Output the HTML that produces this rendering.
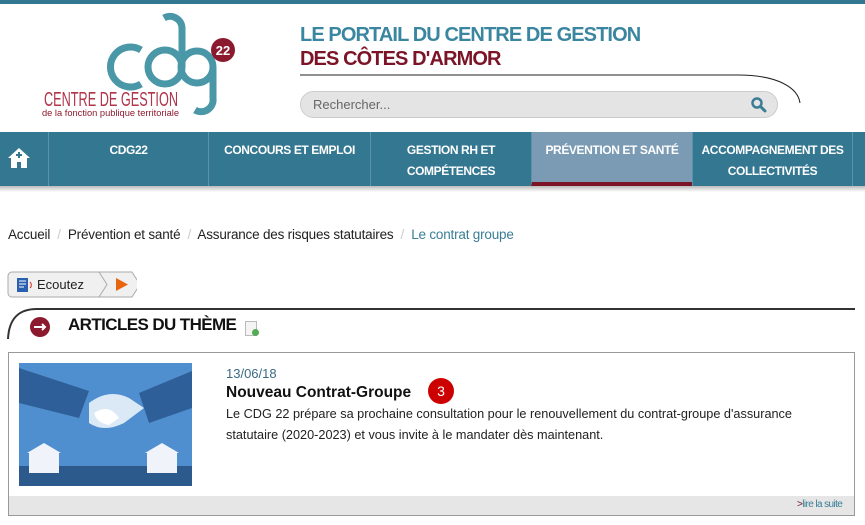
<!DOCTYPE html>
<html><head><meta charset="utf-8"><style>
*{margin:0;padding:0;box-sizing:border-box}
body{width:865px;height:525px;overflow:hidden;background:#fff;font-family:"Liberation Sans",sans-serif;position:relative;color:#222}
.a{position:absolute}
.nav{top:132px;left:0;width:865px;height:54px;background:#347791}
.nav div{position:absolute;top:0;height:54px;border-left:1px solid #5b93aa;color:#fff;font-weight:bold;font-size:12px;text-align:center;line-height:21px;padding-top:8px;letter-spacing:-0.4px}
</style></head><body>
<div class="a" style="top:0;left:0;width:865px;height:4px;background:#347791"></div>
<svg class="a" style="left:40px;top:12px" width="200" height="110" viewBox="40 12 200 110">
<g fill="none" stroke="#4a97a8" stroke-width="7">
<path d="M141 50 a20 20 0 1 0 0 34"/>
<circle cx="165" cy="67" r="17"/>
<path d="M182 67 V28 a12 12 0 0 0 -18 -10"/>
<circle cx="197" cy="67" r="16"/>
<path d="M213 67 V98 a12 12 0 0 1 -18 12"/>
</g>
<circle cx="223" cy="50" r="12" fill="#8b1a2e"/>
<text x="223" y="55" fill="#fff" font-size="13" font-weight="bold" text-anchor="middle" font-family="Liberation Sans">22</text>
<text x="44" y="106" fill="#b0344a" font-size="20" font-family="Liberation Sans Narrow,Liberation Sans" textLength="134" lengthAdjust="spacingAndGlyphs">CENTRE DE GESTION</text>
<text x="42" y="116" fill="#8b1a2e" font-size="9" font-family="Liberation Sans" textLength="137" lengthAdjust="spacingAndGlyphs">de la fonction publique territoriale</text>
</svg>
<div class="a" style="left:300px;top:24px;font-size:20px;font-weight:bold;color:#3a86a0;letter-spacing:-0.9px">LE PORTAIL DU CENTRE DE GESTION</div>
<div class="a" style="left:300px;top:48px;font-size:20px;font-weight:bold;color:#7c1427;letter-spacing:-0.9px">DES CÔTES D'ARMOR</div>
<svg class="a" style="left:298px;top:70px" width="510" height="35"><path d="M2 5 H440 C480 5 500 18 502 33" fill="none" stroke="#222" stroke-width="1"/></svg>
<div class="a" style="left:300px;top:91px;width:478px;height:27px;border-radius:14px;background:#e4e4e4;border:1px solid #ccc"></div>
<div class="a" style="left:313px;top:97px;font-size:13px;color:#666">Rechercher...</div>
<svg class="a" style="left:751px;top:97px" width="16" height="16"><circle cx="6" cy="6" r="4.5" fill="none" stroke="#3a7d96" stroke-width="2.5"/><path d="M9.5 9.5 L14 14" stroke="#3a7d96" stroke-width="3" stroke-linecap="round"/></svg>
<div class="a nav">
<svg class="a" style="left:7px;top:14px" width="24" height="24" viewBox="0 0 24 24"><path d="M12 2 L1 12 L4 12 L4 22 L10 22 L10 16 L14 16 L14 22 L20 22 L20 12 L23 12 Z" fill="#fff"/><path d="M12 6 v6 M9 9 h6" stroke="#347791" stroke-width="2"/></svg>
<div style="left:48px;width:160px">CDG22</div>
<div style="left:208px;width:162px">CONCOURS ET EMPLOI</div>
<div style="left:370px;width:161px">GESTION RH ET<br>COMPÉTENCES</div>
<div style="left:531px;width:161px;background:#7b9bb4;border-bottom:4px solid #7c1427">PRÉVENTION ET SANTÉ</div>
<div style="left:692px;width:160px">ACCOMPAGNEMENT DES<br>COLLECTIVITÉS</div>
<div style="left:852px;width:13px"></div>
</div>
<div class="a" style="top:186px;left:0;width:865px;height:6px;background:linear-gradient(#bbb,#fff)"></div>
<div class="a" style="left:8px;top:227px;font-size:13.5px;color:#222;letter-spacing:-0.2px">Accueil <span style="color:#ccc">&nbsp;/&nbsp;</span> Prévention et santé <span style="color:#ccc">&nbsp;/&nbsp;</span> Assurance des risques statutaires <span style="color:#ccc">&nbsp;/&nbsp;</span> <span style="color:#3a7d96">Le contrat groupe</span></div>
<svg class="a" style="left:7px;top:271px" width="130" height="28"><path d="M5 1 H125 L133 13.5 L125 26 H5 a4 4 0 0 1 -4 -4 V5 a4 4 0 0 1 4 -4Z" fill="#f0f0f0" stroke="#aaa"/><path d="M92 1 L100 13.5 L92 26" fill="none" stroke="#aaa"/><path d="M109 7 L121 13.5 L109 20Z" fill="#e8650c"/><rect x="10" y="7" width="11" height="14" fill="#2b5fb0"/><path d="M12 10h7M12 13h7M12 16h5" stroke="#fff"/><path d="M23 11 a4 4 0 0 1 0 6" stroke="#d22" fill="none"/></svg>
<div class="a" style="left:37px;top:277px;font-size:13px;color:#222">Ecoutez</div>
<svg class="a" style="left:7px;top:306px" width="850" height="34"><path d="M1 33 C2 12 12 3 30 3 H848" fill="none" stroke="#333" stroke-width="2"/></svg>
<div class="a" style="left:30px;top:317px;width:20px;height:20px;border-radius:50%;background:#8b1a2e"></div>
<svg class="a" style="left:33px;top:322px" width="14" height="10"><path d="M1 5 H12 M9 2 L12 5 L9 8" stroke="#fff" stroke-width="2" fill="none"/></svg>
<div class="a" style="left:68px;top:315px;font-size:17px;font-weight:bold;color:#111;letter-spacing:-0.6px">ARTICLES DU THÈME</div>
<div class="a" style="left:245px;top:321px;width:12px;height:15px;background:#f4f4f4;border:1px solid #bbb"></div>
<div class="a" style="left:252px;top:329px;width:7px;height:7px;border-radius:50%;background:#5a5"></div>
<div class="a" style="left:8px;top:352px;width:847px;height:164px;border:1px solid #999"></div>
<div class="a" style="left:9px;top:496px;width:845px;height:19px;background:#e6e6e6"></div>
<div class="a" style="left:797px;top:499px;font-size:10px;color:#3a7d96;letter-spacing:-0.6px"><span style="color:#7c1427">&gt;</span>lire la suite</div>
<svg class="a" style="left:19px;top:363px" width="173" height="123"><rect width="173" height="123" fill="#4f8fcf"/><rect y="103" width="173" height="20" fill="#2d5a8c"/><path d="M0 5 L70 28 L60 55 L0 40Z" fill="#2f5f98"/><path d="M173 8 L120 30 L130 60 L173 45Z" fill="#2f5f98"/><path d="M70 40 Q90 25 110 35 L125 45 L105 60 Q85 70 70 60Z" fill="#dbe9f7"/><path d="M75 50 Q90 40 100 55 L90 62 Q78 60 75 50Z" fill="#fff"/><g fill="#f0f4fa"><rect x="10" y="90" width="30" height="20"/><path d="M8 90 L25 80 L42 90Z"/><rect x="128" y="90" width="30" height="20"/><path d="M126 90 L143 80 L160 90Z"/></g></svg>
<div class="a" style="left:226px;top:366px;font-size:13px;color:#3a6a84">13/06/18</div>
<div class="a" style="left:226px;top:384px;font-size:15.5px;font-weight:bold;color:#111">Nouveau Contrat-Groupe</div>
<div class="a" style="left:428px;top:378px;width:26px;height:26px;border-radius:50%;background:#c00;color:#fff;font-size:14px;text-align:center;line-height:26px">3</div>
<div class="a" style="left:226px;top:404px;width:620px;font-size:12.7px;line-height:21px;color:#222">Le CDG 22 prépare sa prochaine consultation pour le renouvellement du contrat-groupe d'assurance statutaire (2020-2023) et vous invite à le mandater dès maintenant.</div>
</body></html>
